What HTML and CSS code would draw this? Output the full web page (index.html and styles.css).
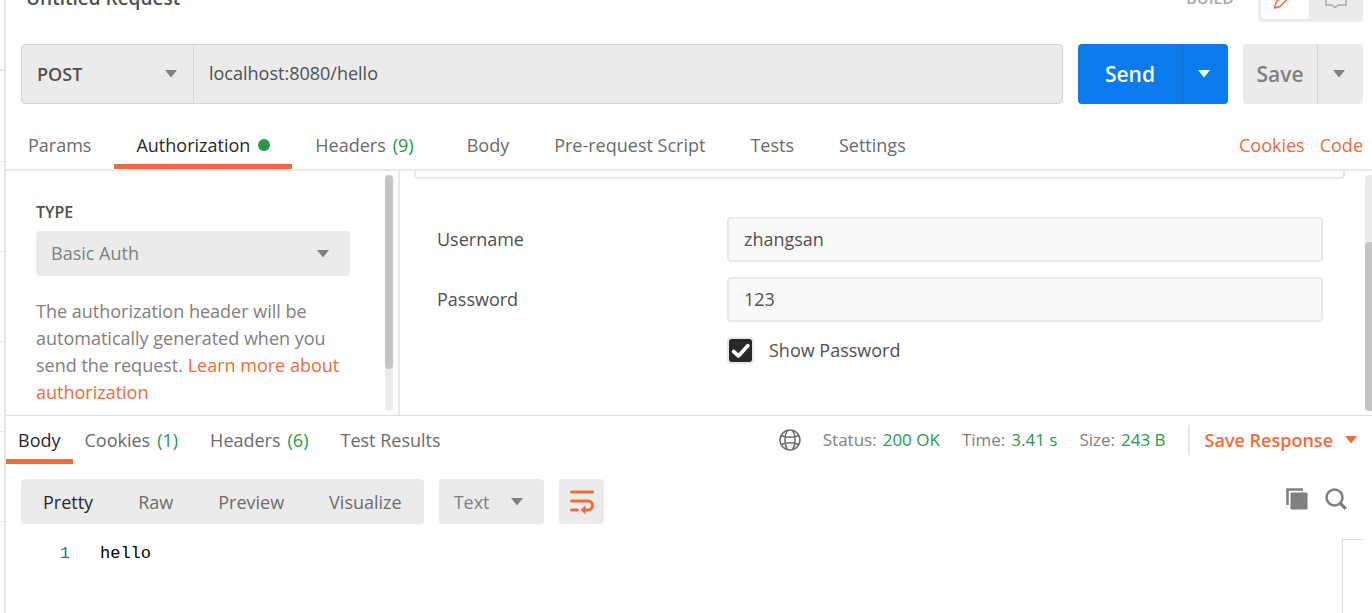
FILE: index.html
```html
<!DOCTYPE html>
<html lang="en">
<head>
<meta charset="utf-8">
<title>Untitled Request</title>
<link rel="stylesheet" href="styles.css">
</head>
<body>
<svg class="defs" aria-hidden="true">
  <symbol id="caret" viewBox="0 0 12 8"><path d="M0 0h12L6 7.5z" fill="currentColor"/></symbol>
</svg>
<div class="app">
  <aside class="rail" aria-hidden="true">
    <span></span><span></span><span></span><span></span><span></span><span></span>
  </aside>
  <main class="workspace">
    <header class="title-clip">
      <div class="title-row">
        <h1 class="title">Untitled Request</h1>
        <span class="mode-label">BUILD</span>
        <div class="mode">
          <button class="mode-btn active" type="button" aria-label="Edit">
            <svg width="24" height="24" viewBox="0 0 24 24" fill="none" stroke="currentColor" stroke-width="1.5" stroke-linejoin="round"><path d="M1.500 20l1.500-5.500L15.500 2l4 4L7 18.500z"/></svg>
          </button>
          <button class="mode-btn" type="button" aria-label="Comments">
            <svg width="24" height="24" viewBox="0 0 24 24" fill="none" stroke="currentColor" stroke-width="1.5"><path d="M2 2h20v15h-7.500L11 19.500 8 17H2z"/></svg>
          </button>
        </div>
      </div>
    </header>

    <form class="request-bar">
      <div class="url-box">
        <div class="select method">
          <select aria-label="Method"><option>POST</option></select>
          <svg class="caret"><use href="#caret"/></svg>
        </div>
        <input class="url" type="text" aria-label="Request URL" value="localhost:8080/hello">
      </div>
      <div class="split send">
        <button type="button" class="split-main">Send</button>
        <button type="button" class="split-more" aria-label="Send options"><svg class="caret"><use href="#caret"/></svg></button>
      </div>
      <div class="split save">
        <button type="button" class="split-main">Save</button>
        <button type="button" class="split-more" aria-label="Save options"><svg class="caret"><use href="#caret"/></svg></button>
      </div>
    </form>

    <nav class="request-tabs">
      <button type="button" class="tab">Params</button>
      <button type="button" class="tab active">Authorization<i class="dot"></i></button>
      <button type="button" class="tab">Headers<span class="count">(9)</span></button>
      <button type="button" class="tab">Body</button>
      <button type="button" class="tab">Pre-request Script</button>
      <button type="button" class="tab">Tests</button>
      <button type="button" class="tab">Settings</button>
      <div class="tab-links"><a href="#cookies">Cookies</a><a href="#code">Code</a></div>
    </nav>

    <section class="auth">
      <div class="auth-type">
        <label class="type-label" for="type">TYPE</label>
        <div class="select type-select">
          <select id="type"><option>Basic Auth</option></select>
          <svg class="caret"><use href="#caret"/></svg>
        </div>
        <p class="hint">The authorization header will be automatically generated when you send the request. <a href="#learn">Learn more about authorization</a></p>
        <div class="scrollbar"><i class="thumb"></i></div>
      </div>
      <div class="auth-form">
        <div class="notice"></div>
        <div class="fields">
          <label for="username">Username</label>
          <input class="field" id="username" type="text" value="zhangsan">
          <label for="password">Password</label>
          <input class="field" id="password" type="text" value="123">
          <div class="show">
            <span class="check">
              <input type="checkbox" id="show" checked>
              <svg viewBox="0 0 22 22" fill="none" stroke="#fff" stroke-width="3.6" stroke-linecap="round" stroke-linejoin="round"><path d="M4.500 12l4.500 4.200L18 6.500"/></svg>
            </span>
            <label for="show">Show Password</label>
          </div>
        </div>
        <div class="scrollbar edge"><i class="thumb"></i></div>
      </div>
    </section>

    <section class="response">
      <div class="response-head">
        <nav class="response-tabs">
          <button type="button" class="tab active">Body</button>
          <button type="button" class="tab">Cookies<span class="count">(1)</span></button>
          <button type="button" class="tab">Headers<span class="count">(6)</span></button>
          <button type="button" class="tab">Test Results</button>
        </nav>
        <div class="meta">
          <svg class="globe" width="22" height="22" viewBox="0 0 22 22" fill="none" stroke="currentColor" stroke-width="1.5"><circle cx="11" cy="11" r="10"/><path d="M8.500 1.200C5 6.500 5 15.500 8.500 20.800M13.500 1.200c3.500 5.300 3.500 14.300 0 19.600M2.500 6.500c4 2.200 13 2.200 17 0M2.500 15.500c4-2.200 13-2.200 17 0"/></svg>
          <span class="stat">Status:<b>200 OK</b></span>
          <span class="stat">Time:<b>3.41 s</b></span>
          <span class="stat">Size:<b>243 B</b></span>
          <button type="button" class="save-response">Save Response<svg class="caret"><use href="#caret"/></svg></button>
        </div>
      </div>

      <div class="toolbar">
        <div class="views">
          <button type="button" class="active">Pretty</button>
          <button type="button">Raw</button>
          <button type="button">Preview</button>
          <button type="button">Visualize</button>
        </div>
        <div class="select format">
          <select aria-label="Format"><option>Text</option></select>
          <svg class="caret"><use href="#caret"/></svg>
        </div>
        <button type="button" class="wrap" aria-label="Wrap lines">
          <svg width="26" height="26" viewBox="0 0 26 26" fill="none" stroke="currentColor" stroke-width="3" stroke-linecap="round"><path d="M3.500 3h21M3.500 12h16.500a4.500 4.500 0 0 1 0 9H17M3.500 21h6"/><path d="M12.500 21l5-4.800v9.300z" fill="currentColor" stroke="none"/></svg>
        </button>
        <div class="tools">
          <button type="button" aria-label="Copy"><svg width="22" height="22" viewBox="0 0 22 22"><path d="M1.500 17V1.500H17" fill="none" stroke="currentColor" stroke-width="2.600"/><rect x="4.500" y="4.500" width="17" height="17" rx="1" fill="currentColor"/></svg></button>
          <button type="button" aria-label="Search"><svg width="22" height="22" viewBox="0 0 22 22" fill="none" stroke="currentColor" stroke-width="2.600"><circle cx="9.500" cy="9.500" r="8"/><path d="M15 15l5.800 5.800" stroke-width="3.200"/></svg></button>
        </div>
      </div>

      <div class="editor">
        <span class="line-no">1</span>
        <code class="line">hello</code>
        <div class="minimap"></div>
      </div>
    </section>
  </main>
</div>
</body>
</html>
```
FILE: styles.css
```css
* { box-sizing: border-box; }
body {
  margin: 0;
  background: #fff;
  color: #505050;
  font: 18px/27px "Open Sans", sans-serif;
}
button, input, select {
  margin: 0;
  padding: 0;
  border: 0;
  background: none;
  color: inherit;
  font: inherit;
}
button { cursor: pointer; white-space: nowrap; }
svg { display: block; flex: none; }
a { color: #f26b3a; text-decoration: none; }
.defs { position: absolute; width: 0; height: 0; }
.caret { width: 12px; height: 8px; color: #808080; pointer-events: none; }

.app { display: flex; height: 100vh; overflow: hidden; }
.rail {
  flex: none;
  width: 6px;
  padding-top: 69px;
  border-right: 2px solid #e6e6e6;
}
.rail span { display: block; height: 90px; border-top: 1px solid #e6e6e6; }
.rail span:first-child { height: 92px; border-top-width: 2px; }
.workspace { flex: 1; min-width: 0; display: flex; flex-direction: column; }

/* Title row, scrolled partly under the window's top edge */
.title-clip {
  display: flex;
  align-items: flex-end;
  height: 22px;
  overflow: hidden;
  padding: 0 9px 0 20px;
}
.title-row { flex: 1; display: flex; align-items: center; height: 45px; }
.title { margin: 0; padding-bottom: 2px; font-size: 19px; font-weight: 600; }
.mode-label { margin-left: auto; margin-right: 24px; padding-bottom: 2px; font-size: 16px; font-weight: 600; color: #a9a9a9; }
.mode { display: flex; gap: 3px; width: 105px; height: 45px; padding: 3px; border-radius: 4px; background: #ebebeb; }
.mode-btn { flex: 1; display: grid; place-items: center; border-radius: 4px; color: #a9a9a9; }
.mode-btn.active { background: #fff; color: #f26b3a; }

/* Request line */
.request-bar { display: flex; gap: 15px; padding: 22px 9px 0 15px; }
.url-box {
  flex: 1;
  display: flex;
  height: 60px;
  border: 1px solid #d4d4d4;
  border-radius: 4px;
  background: #ebebeb;
  overflow: hidden;
}
.select { display: grid; align-items: center; }
.select select, .select .caret { grid-area: 1 / 1; }
.select select { width: 100%; height: 100%; padding: 0 15px; appearance: none; }
.select .caret { justify-self: end; margin-right: 21px; }
.method { width: 172px; border-right: 1px solid #d4d4d4; font-weight: 600; }
.method .caret { margin-right: 16px; }
.url { flex: 1; min-width: 0; padding: 0 15px 2px; }
.split { display: flex; height: 60px; border-radius: 4px; overflow: hidden; font-size: 21px; font-weight: 600; }
.split-more { display: grid; place-items: center; width: 46px; padding-right: 3px; border-left: 1px solid #d4d4d4; }
.send { background: #097bed; color: #fff; }
.send .split-main { width: 104px; }
.send .split-more { border-color: #0a6fd4; }
.send .caret { color: #fff; }
.save { background: #ebebeb; color: #808080; }
.save .split-main { width: 74px; }

/* Tabs */
.request-tabs { display: flex; gap: 1px; height: 67px; padding-right: 9px; border-bottom: 2px solid #e9e9e9; }
.tab { display: flex; align-items: center; color: #6b6b6b; border-bottom: 5px solid transparent; }
.tab.active { color: #282828; border-color: #f26b3a; }
.request-tabs .tab { padding: 22px 22px 0; }
.count { margin: 0 8px 0 7px; color: #249c47; }
.dot { width: 12px; height: 12px; margin-left: 8px; border-radius: 50%; background: #249c47; }
.tab-links { display: flex; align-items: center; gap: 15px; margin-left: auto; padding: 22px 0 5px; }

/* Authorization */
.auth { display: flex; height: 245px; border-bottom: 1px solid #dfdfdf; }
.auth-type { position: relative; flex: none; width: 394px; padding: 28px 48px 0 30px; border-right: 2px solid #e9e9e9; }
.type-label { display: block; height: 32px; font-size: 16px; font-weight: 600; }
.type-select { height: 45px; border-radius: 4px; background: #ebebeb; color: #808080; }
.hint { margin: 22px 0 0; color: #808080; }
.scrollbar { position: absolute; top: 4px; right: 5px; bottom: 4px; width: 8px; border-radius: 4px; background: #ebebeb; }
.thumb { display: block; height: 194px; border-radius: 4px; background: #c4c4c4; }
.edge { right: 0; width: 7px; border-radius: 4px 0 0 4px; padding-top: 67px; }
.edge .thumb { height: 100%; border-radius: 4px 0 0 4px; }
.auth-form { position: relative; flex: 1; min-width: 0; }
.notice { height: 8px; margin: 0 27px 0 14px; border: 2px solid #e9e9e9; border-top: 0; border-radius: 0 0 4px 4px; }
.fields { display: grid; grid-template-columns: 290px 1fr; gap: 15px 0; align-items: center; padding: 38px 49px 0 37px; }
.field { width: 100%; height: 45px; padding: 0 15px 2px; border: 2px solid #e9e9e9; border-radius: 4px; background: #fafafa; }
.show { grid-column: 2; display: flex; align-items: center; gap: 15px; }
.check { display: grid; width: 27px; height: 27px; }
.check > * { grid-area: 1 / 1; width: 100%; height: 100%; }
.check input { appearance: none; border: 2px solid #e9e9e9; border-radius: 4px; background: #282828; background-clip: padding-box; }
.check svg { padding: 2px; pointer-events: none; }

/* Response */
.response { flex: 1; display: flex; flex-direction: column; }
.response-head { display: flex; justify-content: space-between; height: 48px; padding-right: 15px; }
.response-tabs { display: flex; }
.response-tabs .tab { padding: 5px 12px 0; }
.meta { display: flex; align-items: center; gap: 22px; font-size: 17px; color: #808080; }
.globe { color: #6b6b6b; }
.stat { padding-bottom: 2px; }
.stat b { margin-left: 6px; font-weight: 400; color: #249c47; }
.save-response {
  display: flex;
  align-items: center;
  gap: 12px;
  height: 30px;
  padding-left: 15px;
  border-left: 2px solid #e6e6e6;
  font-size: 18px;
  font-weight: 600;
  color: #f26b3a;
}
.save-response .caret { color: #f26b3a; }
.toolbar { display: flex; gap: 15px; height: 60px; padding: 15px 25px 0 15px; }
.views { display: flex; gap: 1px; border-radius: 4px; background: #ebebeb; color: #6b6b6b; }
.views button { padding: 2px 22px 0; }
.views .active { color: #282828; }
.format { width: 105px; border-radius: 4px; background: #ebebeb; color: #808080; }
.format select { padding-top: 2px; }
.wrap { display: grid; place-items: center; width: 45px; border-radius: 4px; background: #ebebeb; color: #f26b3a; }
.tools { display: flex; align-items: center; gap: 17px; height: 40px; margin-left: auto; color: #808080; }
.editor { flex: 1; display: flex; gap: 30px; padding: 15px 9px 0 0; font: 17px/29px "Liberation Mono", monospace; }
.line-no { width: 64px; text-align: right; color: #237893; }
.line { flex: 1; font: inherit; color: #000; }
.minimap { width: 21px; border: 1px solid #dfdfdf; border-width: 1px 0 0 1px; }
```
